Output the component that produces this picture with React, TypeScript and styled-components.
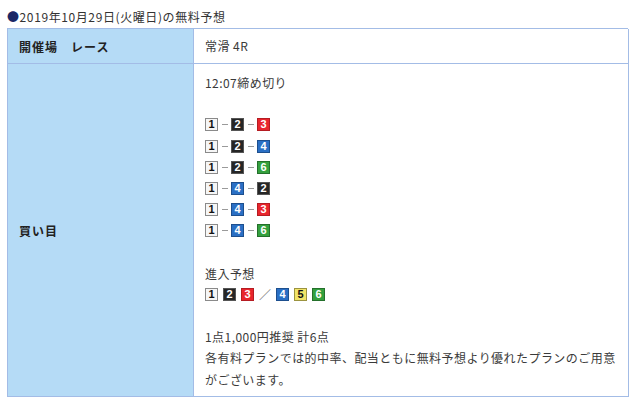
import styled, { createGlobalStyle } from "styled-components"

const GlobalStyle = createGlobalStyle`
  body {
    margin: 0;
    background: #ffffff;
    font-family: "Noto Sans CJK JP", "Noto Sans", sans-serif;
    color: #333333;
  }
`

const Page = styled.div`
  padding: 7px 12px 0 7px;
`

const Title = styled.h2`
  margin: 0 0 1px;
  font-size: 12px;
  font-weight: normal;
  line-height: 20px;
  letter-spacing: 0.6px;
  color: #333333;
`

const Bullet = styled.span`
  color: #1a2766;
`

const Table = styled.div`
  display: grid;
  grid-template-columns: 186px 435px;
  border-top: 1px solid #a3bce6;
  border-left: 1px solid #a3bce6;
`

const HeadCell = styled.div<{ $tall?: boolean }>`
  display: flex;
  align-items: center;
  background: #b5dbf6;
  border-right: 1px solid #a3bce6;
  border-bottom: 1px solid #a3bce6;
  padding: 0 11px;
  height: ${(p) => (p.$tall ? "333px" : "35px")};
  box-sizing: border-box;
  font-size: 12px;
  font-weight: bold;
  letter-spacing: 1px;
  color: #222222;
  white-space: pre;
`

const BodyCell = styled.div<{ $tall?: boolean }>`
  border-right: 1px solid #a3bce6;
  border-bottom: 1px solid #a3bce6;
  padding: ${(p) => (p.$tall ? "8px 11px 6px 11px" : "0 11px")};
  display: ${(p) => (p.$tall ? "block" : "flex")};
  align-items: center;
  box-sizing: border-box;
  height: ${(p) => (p.$tall ? "333px" : "35px")};
  font-size: 12px;
  line-height: 21.2px;
  letter-spacing: 0.45px;
  color: #3a3a3a;
`

const Line = styled.div`
  min-height: 21.2px;
`

const BoxRow = styled.div<{ $gap?: number }>`
  display: flex;
  align-items: center;
  height: 21.2px;
  gap: ${(p) => p.$gap ?? 0}px;
`

const boxColors: Record<number, { bg: string; fg: string; border: string }> = {
  1: { bg: "#f6f6f6", fg: "#111111", border: "#8a8a8a" },
  2: { bg: "#262626", fg: "#ffffff", border: "#555555" },
  3: { bg: "#e8252d", fg: "#ffffff", border: "#b51c22" },
  4: { bg: "#2a6fc4", fg: "#ffffff", border: "#1d4f8e" },
  5: { bg: "#f1e468", fg: "#111111", border: "#9b9340" },
  6: { bg: "#34a03e", fg: "#ffffff", border: "#24702b" },
}

const Box = styled.span<{ $n: number }>`
  display: inline-flex;
  align-items: center;
  justify-content: center;
  width: 13px;
  height: 13px;
  box-sizing: border-box;
  border: 1px solid ${(p) => boxColors[p.$n].border};
  background: ${(p) => boxColors[p.$n].bg};
  color: ${(p) => boxColors[p.$n].fg};
  font-family: "Liberation Sans", Arial, sans-serif;
  font-weight: bold;
  font-size: 11px;
  line-height: 11px;
  letter-spacing: 0;
`

const Dash = styled.span`
  width: 6px;
  height: 1px;
  background: #9a9a9a;
  margin: 0 3px 0 4px;
`

const Slash = styled.span`
  width: 12px;
  text-align: center;
  color: #777777;
  font-size: 12px;
  letter-spacing: 0;
`

const picks = [
  [1, 2, 3],
  [1, 2, 4],
  [1, 2, 6],
  [1, 4, 2],
  [1, 4, 3],
  [1, 4, 6],
]

export default function App() {
  return (
    <>
      <GlobalStyle />
      <Page>
        <Title>
          <Bullet>●</Bullet>2019年10月29日(火曜日)の無料予想
        </Title>
        <Table>
          <HeadCell>{"開催場　レース"}</HeadCell>
          <BodyCell>常滑 4R</BodyCell>
          <HeadCell $tall>買い目</HeadCell>
          <BodyCell $tall>
            <Line>12:07締め切り</Line>
            <Line />
            {picks.map((row, i) => (
              <BoxRow key={i}>
                <Box $n={row[0]}>{row[0]}</Box>
                <Dash />
                <Box $n={row[1]}>{row[1]}</Box>
                <Dash />
                <Box $n={row[2]}>{row[2]}</Box>
              </BoxRow>
            ))}
            <Line />
            <Line>進入予想</Line>
            <BoxRow $gap={5}>
              <Box $n={1}>1</Box>
              <Box $n={2}>2</Box>
              <Box $n={3}>3</Box>
              <Slash>／</Slash>
              <Box $n={4}>4</Box>
              <Box $n={5}>5</Box>
              <Box $n={6}>6</Box>
            </BoxRow>
            <Line />
            <Line>1点1,000円推奨 計6点</Line>
            <Line>
              各有料プランでは的中率、配当ともに無料予想より優れたプランのご用意がございます。
            </Line>
          </BodyCell>
        </Table>
      </Page>
    </>
  )
}
